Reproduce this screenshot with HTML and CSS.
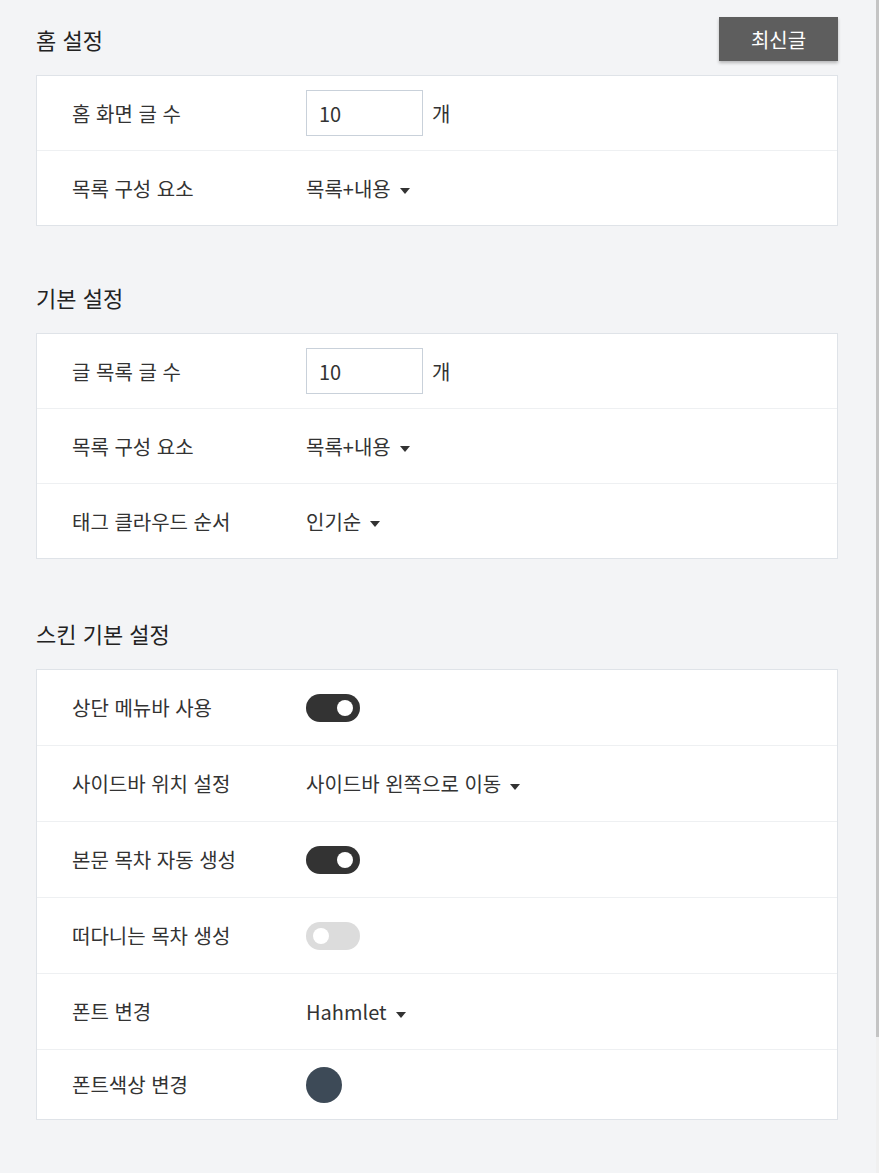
FILE: index.html
```html
<!doctype html>
<html lang="ko">

<head>
  <meta charset="UTF-8">
  <meta name="viewport" content="width=device-width, initial-scale=1.0">
  <title>스킨 설정</title>
  <link rel="stylesheet" href="styles.css">
</head>

<body>
  <div class="page">

    <div class="section">
      <div class="section-head">
        <h2>홈 설정</h2>
        <button class="btn-dark">최신글</button>
      </div>
      <div class="card">
        <div class="row">
          <div class="label">홈 화면 글 수</div>
          <div class="value"><input class="num" value="10" /><span class="unit">개</span></div>
        </div>
        <div class="row">
          <div class="label">목록 구성 요소</div>
          <div class="value"><span class="select">목록+내용</span></div>
        </div>
      </div>
    </div>

    <div class="section">
      <div class="section-head">
        <h2>기본 설정</h2>
      </div>
      <div class="card">
        <div class="row">
          <div class="label">글 목록 글 수</div>
          <div class="value"><input class="num" value="10" /><span class="unit">개</span></div>
        </div>
        <div class="row">
          <div class="label">목록 구성 요소</div>
          <div class="value"><span class="select">목록+내용</span></div>
        </div>
        <div class="row">
          <div class="label">태그 클라우드 순서</div>
          <div class="value"><span class="select">인기순</span></div>
        </div>
      </div>
    </div>

    <div class="section section-skin">
      <div class="section-head">
        <h2>스킨 기본 설정</h2>
      </div>
      <div class="card card-tall">
        <div class="row">
          <div class="label">상단 메뉴바 사용</div>
          <div class="value"><span class="toggle on"></span></div>
        </div>
        <div class="row">
          <div class="label">사이드바 위치 설정</div>
          <div class="value"><span class="select">사이드바 왼쪽으로 이동</span></div>
        </div>
        <div class="row">
          <div class="label">본문 목차 자동 생성</div>
          <div class="value"><span class="toggle on"></span></div>
        </div>
        <div class="row">
          <div class="label">떠다니는 목차 생성</div>
          <div class="value"><span class="toggle"></span></div>
        </div>
        <div class="row">
          <div class="label">폰트 변경</div>
          <div class="value"><span class="select">Hahmlet</span></div>
        </div>
        <div class="row row-last">
          <div class="label">폰트색상 변경</div>
          <div class="value"><span class="swatch"></span></div>
        </div>
      </div>
    </div>

  </div>

  <!-- thin scrollbar on the right edge -->
  <div class="scrollbar"><div class="thumb"></div></div>
</body>

</html>
```

FILE: styles.css
```css
* {
  margin: 0;
  padding: 0;
  box-sizing: border-box;
}

body {
  background: #f3f4f6;
  color: #333;
  font-family: "Noto Sans CJK KR", "Noto Sans", sans-serif;
}

.page {
  padding: 17px 41px 54px 36px;
}

.section + .section {
  margin-top: 49px;
}

.section-skin {
  margin-top: 52px !important;
}

.section-head {
  display: flex;
  align-items: center;
  justify-content: space-between;
  height: 44px;
  margin-bottom: 14px;
}

.section-head h2 {
  font-size: 22px;
  font-weight: 400;
  color: #222;
}

.btn-dark {
  width: 119px;
  height: 44px;
  background: #5e5e5e;
  color: #fff;
  border: none;
  font-family: inherit;
  font-size: 20px;
  box-shadow: 0 2px 3px rgba(0, 0, 0, .25);
}

.card {
  background: #fff;
  border: 1px solid #dfe3e8;
}

.row {
  display: flex;
  align-items: center;
  height: 75px;
  padding: 0 35px;
  border-bottom: 1px solid #eef0f2;
}

.row:last-child {
  border-bottom: none;
  height: 74px;
}

.card-tall .row {
  height: 76px;
}

.card-tall .row-last {
  height: 69px;
}

.label {
  width: 234px;
  font-size: 20px;
}

.value {
  display: flex;
  align-items: center;
  font-size: 20px;
}

.num {
  width: 117px;
  height: 46px;
  border: 1px solid #c9d1da;
  padding: 0 12px;
  font-family: inherit;
  font-size: 20px;
  color: #333;
}

.unit {
  margin-left: 9px;
}

.select::after {
  content: "";
  display: inline-block;
  margin-left: 9px;
  vertical-align: middle;
  border-left: 5px solid transparent;
  border-right: 5px solid transparent;
  border-top: 6px solid #333;
}

.toggle {
  position: relative;
  display: block;
  width: 54px;
  height: 28px;
  border-radius: 14px;
  background: #dcdcdc;
}

.toggle::after {
  content: "";
  position: absolute;
  top: 6px;
  left: 7px;
  width: 16px;
  height: 16px;
  border-radius: 50%;
  background: #fff;
}

.toggle.on {
  background: #333;
}

.toggle.on::after {
  left: 31px;
}

.swatch {
  display: block;
  width: 36px;
  height: 36px;
  border-radius: 50%;
  background: #3d4a57;
}

.scrollbar {
  position: fixed;
  top: 0;
  right: 0;
  bottom: 0;
  width: 3px;
  background: #f0f0f0;
}

.scrollbar .thumb {
  height: 1037px;
  background: #c4c4c4;
}
```
